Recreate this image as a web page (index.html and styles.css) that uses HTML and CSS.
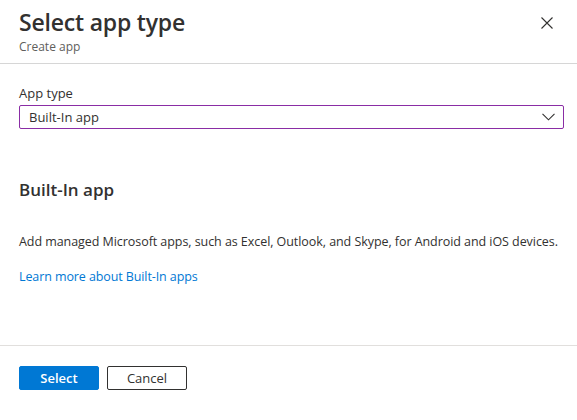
FILE: index.html
```html
<!DOCTYPE html>
<html>
<head>
<meta charset="utf-8">
<link rel="stylesheet" href="styles.css">
</head>
<body>
<div class="panel">
  <header class="header">
    <div class="titles">
      <h1 class="title">Select app type</h1>
      <div class="subtitle">Create app</div>
    </div>
    <button class="close" aria-label="Close">
      <svg width="12" height="12" viewBox="0 0 12 12"><path d="M0.5 0.5 L11.5 11.5 M11.5 0.5 L0.5 11.5" stroke="#323130" stroke-width="1.1" fill="none"/></svg>
    </button>
  </header>
  <main class="content">
    <label class="label">App type</label>
    <div class="dropdown">
      <span>Built-In app</span>
      <svg width="13" height="8" viewBox="0 0 13 8"><path d="M0.5 0.8 L6.5 6.8 L12.5 0.8" stroke="#323130" stroke-width="1.1" fill="none"/></svg>
    </div>
    <h2 class="section">Built-In app</h2>
    <p class="desc">Add managed Microsoft apps, such as Excel, Outlook, and Skype, for Android and iOS devices.</p>
    <a class="link" href="#">Learn more about Built-In apps</a>
  </main>
  <footer class="footer">
    <button class="btn primary">Select</button>
    <button class="btn secondary">Cancel</button>
  </footer>
</div>
</body>
</html>
```

FILE: styles.css
```css
* { box-sizing: border-box; }
html, body { margin: 0; padding: 0; background: #fff; }
body {
  font-family: "Open Sans", "Noto Sans", "Liberation Sans", sans-serif;
  color: #323130;
  width: 577px;
  height: 420px;
  overflow: hidden;
}
.panel { display: flex; flex-direction: column; height: 420px; }
.header {
  display: flex;
  justify-content: space-between;
  align-items: flex-start;
  padding: 4px 24px 0 19px;
  height: 64px;
  border-bottom: 1px solid #d6d6d6;
}
.title {
  margin: 0;
  font-size: 23px;
  font-weight: 600;
  line-height: 36px;
  letter-spacing: -0.2px;
  color: #323130;
}
.subtitle {
  font-size: 12px;
  line-height: 14px;
  color: #605e5c;
}
.close {
  border: none;
  background: none;
  padding: 0;
  margin-top: 13px;
  width: 12px;
  height: 12px;
  display: flex;
}
.content {
  flex: 1;
  padding: 20px 13px 0 19px;
  display: flex;
  flex-direction: column;
  align-items: flex-start;
}
.label {
  font-size: 13px;
  line-height: 18px;
  color: #323130;
  margin-bottom: 3px;
}
.dropdown {
  align-self: stretch;
  height: 24px;
  border: 1px solid #8a2da5;
  border-radius: 2px;
  display: flex;
  align-items: center;
  justify-content: space-between;
  padding: 0 8px 0 9px;
  font-size: 13px;
}
.section {
  margin: 50px 0 0 0;
  font-size: 17px;
  line-height: 22px;
  font-weight: 600;
  color: #323130;
}
.desc {
  margin: 32px 0 0 0;
  font-size: 12.5px;
  line-height: 18px;
  letter-spacing: -0.06px;
}
.link {
  margin-top: 17px;
  font-size: 12.5px;
  line-height: 18px;
  letter-spacing: -0.1px;
  color: #0078d4;
  text-decoration: none;
}
.footer {
  height: 75px;
  border-top: 1px solid #e1dfdd;
  display: flex;
  align-items: flex-start;
  gap: 8px;
  padding: 20px 0 0 19px;
}
.btn {
  width: 80px;
  height: 24px;
  border-radius: 2px;
  font-family: inherit;
  font-size: 13px;
  padding: 0;
}
.primary {
  background: #0078d4;
  color: #fff;
  border: 1px solid #0078d4;
  font-weight: 600;
}
.secondary {
  background: #fff;
  color: #323130;
  border: 1px solid #323130;
}
```
